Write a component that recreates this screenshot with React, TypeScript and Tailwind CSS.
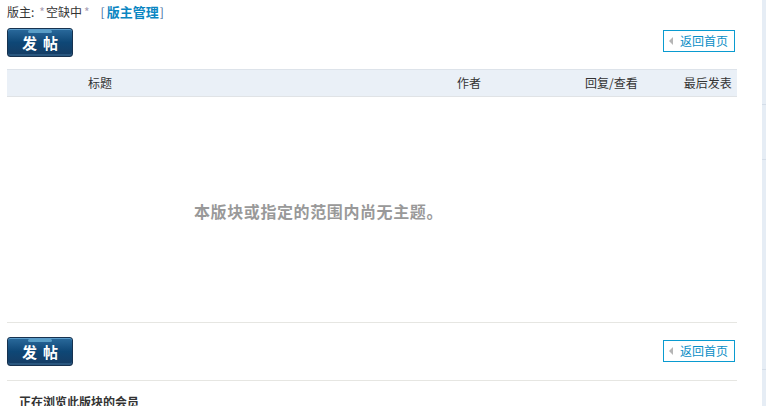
const font = { fontFamily: '"Noto Sans CJK SC", "Liberation Sans", sans-serif' };

function PostButton() {
  return (
    <div className="relative w-[66px] h-[29px] rounded-[3px] border border-[#17324f] bg-gradient-to-b from-[#2a6a9c] via-[#0e4776] to-[#153c63] flex items-center justify-center shadow-[inset_0_1px_0_#5b9ccb,inset_0_-2px_0_#2a577f]">
      <div className="absolute top-[1px] left-[20px] right-[20px] h-[3px] rounded-full bg-[#6fb6dc] opacity-70" />
      <span className="relative text-white font-bold text-[15px] leading-none tracking-[6px] pl-[6px]">发帖</span>
    </div>
  );
}

function BackButton() {
  return (
    <div className="w-[72px] h-[22px] border border-[#0a9bd0] flex items-center bg-white">
      <span className="ml-[5px] w-0 h-0 border-y-[4px] border-y-transparent border-r-[4px] border-r-[#b5b5b5]" />
      <span className="ml-[7px] text-[12px] leading-none text-[#0a8ec6]">返回首页</span>
    </div>
  );
}

export default function App() {
  return (
    <div className="relative w-[766px] h-[406px] bg-white overflow-hidden text-[#333]" style={font}>
      <div className="absolute top-0 right-0 w-[4px] h-full bg-[#e6edf5] flex flex-col">
        <div className="h-[105px] border-b border-[#d4dde8]" />
        <div className="h-[55px] border-b border-[#d4dde8]" />
        <div className="h-[210px] border-b border-[#d4dde8]" />
      </div>
      <div className="w-[730px] ml-[7px]">
        <div className="pt-[3px] h-[20px] text-[12px] leading-[16px] flex items-center">
          <span>版主:</span>
          <span className="ml-[5px] text-[#a9a0b5]">*</span>
          <span className="ml-[1px]">空缺中</span>
          <span className="ml-[2px] text-[#a9a0b5]">*</span>
          <span className="ml-[11px] text-[#3b6a9c]">[</span>
          <span className="ml-[2px] font-bold text-[13px] text-[#0a86c2]">版主管理</span>
          <span className="ml-[1px] text-[#3b6a9c]">]</span>
        </div>
        <div className="mt-[8px] flex items-start justify-between">
          <PostButton />
          <div className="mt-[2px] mr-[2px]">
            <BackButton />
          </div>
        </div>
        <div className="mt-[12px] h-[28px] bg-[#eaf0f7] border-t border-t-[#dde3ea] border-b border-b-[#e0e3e6] flex items-center text-[12px]">
          <span className="ml-[81px]">标题</span>
          <span className="ml-[345px]">作者</span>
          <span className="ml-[104px]">回复/查看</span>
          <span className="ml-[46px]">最后发表</span>
        </div>
        <div className="h-[226px] border-b border-[#e6e6e2] flex items-center">
          <span className="ml-[187px] mt-[3px] text-[16px] font-bold text-[#999] tracking-[0.6px]">本版块或指定的范围内尚无主题。</span>
        </div>
        <div className="h-[58px] border-b border-[#e6e6e2] flex items-center justify-between">
          <PostButton />
          <div className="mr-[2px] -mt-[1px]">
            <BackButton />
          </div>
        </div>
        <div className="pt-[13px] pl-[12px] text-[12px] leading-[16px] font-bold text-[#333]">正在浏览此版块的会员</div>
      </div>
    </div>
  );
}
